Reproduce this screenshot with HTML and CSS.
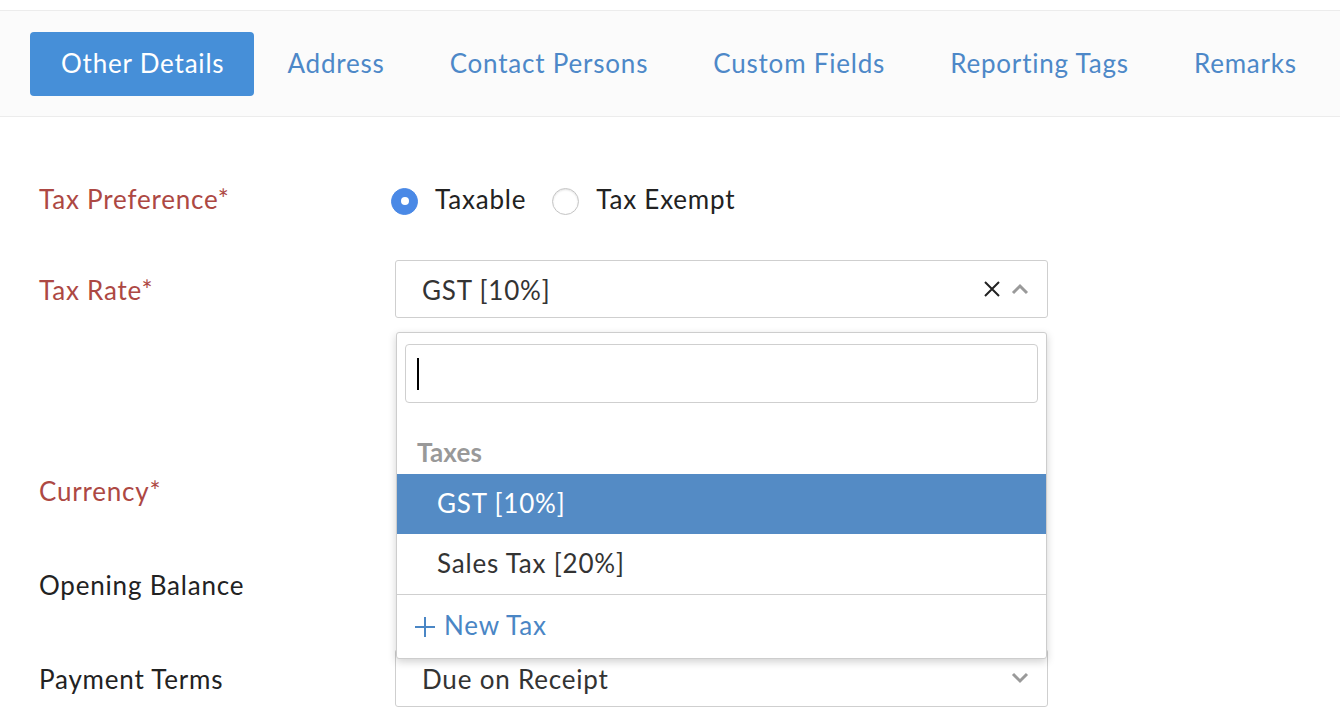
FILE: index.html
```html
<!DOCTYPE html>
<html>
<head>
<meta charset="utf-8">
<link rel="stylesheet" href="styles.css">
</head>
<body>
<div class="topgap"></div>
<nav class="tabs">
  <a class="tab active">Other Details</a>
  <a class="tab">Address</a>
  <a class="tab">Contact Persons</a>
  <a class="tab">Custom Fields</a>
  <a class="tab">Reporting Tags</a>
  <a class="tab">Remarks</a>
</nav>
<main class="form">
  <div class="row row-pref">
    <label class="lbl req">Tax Preference*</label>
    <div class="field radios">
      <span class="radio checked"></span><span class="rtext">Taxable</span>
      <span class="radio"></span><span class="rtext">Tax Exempt</span>
    </div>
  </div>
  <div class="row row-rate">
    <label class="lbl req">Tax Rate*</label>
    <div class="field">
      <div class="select">
        <span class="val">GST [10%]</span>
        <span class="icons">
          <svg class="x" width="18" height="18" viewBox="0 0 18 18"><path d="M2 2L16 16M16 2L2 16" stroke="#222" stroke-width="2" fill="none"/></svg>
          <svg class="chev" width="18" height="12" viewBox="0 0 18 12"><path d="M2 10L9 3L16 10" stroke="#9a9a9a" stroke-width="3" fill="none"/></svg>
        </span>
      </div>
      <div class="dropdown">
        <div class="search"><span class="caret"></span></div>
        <div class="group">Taxes</div>
        <div class="opt hl">GST [10%]</div>
        <div class="opt">Sales Tax [20%]</div>
        <div class="newtax">
          <svg width="22" height="22" viewBox="0 0 22 22"><path d="M11 1V21M1 11H21" stroke="#4a86c5" stroke-width="2" fill="none"/></svg>
          <span>New Tax</span>
        </div>
      </div>
    </div>
  </div>
  <div class="row row-cur">
    <label class="lbl req">Currency*</label>
    <div class="field"></div>
  </div>
  <div class="row row-open">
    <label class="lbl">Opening Balance</label>
    <div class="field"></div>
  </div>
  <div class="row row-pay">
    <label class="lbl">Payment Terms</label>
    <div class="field">
      <div class="select">
        <span class="val">Due on Receipt</span>
        <span class="icons">
          <svg class="chev" width="18" height="12" viewBox="0 0 18 12"><path d="M2 2L9 9L16 2" stroke="#9a9a9a" stroke-width="3" fill="none"/></svg>
        </span>
      </div>
    </div>
  </div>
</main>
</body>
</html>
```

FILE: styles.css
```css
* { box-sizing: border-box; }
body {
  margin: 0;
  background: #fff;
  font-family: Lato, "Liberation Sans", sans-serif;
  font-size: 26px;
  letter-spacing: 0.8px;
  color: #333;
  overflow: hidden;
}
.topgap { height: 10px; }
.tabs {
  display: flex;
  align-items: center;
  height: 107px;
  padding: 0 30px;
  background: #fbfbfb;
  border-top: 1px solid #ececec;
  border-bottom: 1px solid #ececec;
}
.tab {
  height: 64px;
  display: flex;
  align-items: center;
  padding: 0 32px 2px 33px;
  color: #4d88c8;
  border-radius: 4px;
  white-space: nowrap;
}
.tab.active {
  background: #468fd8;
  color: #fff;
  padding: 0 30px 2px 31px;
}
.form {
  padding: 53px 0 0 39px;
}
.row {
  display: flex;
  align-items: center;
  min-height: 58px;
}
.lbl {
  width: 356px;
  flex: none;
  color: #222;
  padding-top: 2px;
}
.lbl.req { color: #ad4843; }
.row-pref .lbl { padding-top: 0; }
.row-pref { margin-bottom: 32px; }
.row-rate { margin-bottom: 143px; }
.row-cur { margin-bottom: 36px; }
.row-open { margin-bottom: 36px; }
.field {
  width: 653px;
  position: relative;
}
.radios {
  display: flex;
  align-items: center;
  margin-left: -4px;
  padding-top: 4px;
}
.radio {
  width: 27px;
  height: 27px;
  border-radius: 50%;
  border: 1px solid #c4c4c4;
  box-shadow: inset 0 1px 2px rgba(0,0,0,0.12);
  background: #fff;
  flex: none;
  position: relative;
}
.radio.checked {
  background: #4a89e6;
  border-color: #4a89e6;
  box-shadow: none;
}
.radio.checked::after {
  content: "";
  position: absolute;
  left: 50%;
  top: 50%;
  width: 8px;
  height: 8px;
  margin: -4px 0 0 -4px;
  border-radius: 50%;
  background: #fff;
}
.rtext { margin: 0 26px 0 17px; color: #222; position: relative; top: -2px; }
.select {
  height: 58px;
  border: 1px solid #cfcfcf;
  border-radius: 3px;
  display: flex;
  align-items: center;
  padding: 2px 18px 0 26px;
  background: #fff;
}
.val { flex: 1; }
.icons { display: flex; align-items: center; gap: 10px; margin-top: -2px; }
.dropdown {
  position: absolute;
  top: 72px;
  left: 1px;
  width: 651px;
  background: #fff;
  border: 1px solid #cdcdcd;
  border-radius: 3px;
  box-shadow: 0 3px 8px rgba(0,0,0,0.18);
  z-index: 5;
}
.search {
  margin: 11px 8px 0 8px;
  height: 59px;
  border: 1px solid #cfcfcf;
  border-radius: 4px;
  display: flex;
  align-items: center;
  padding-left: 11px;
}
.caret {
  width: 2px;
  height: 32px;
  background: #000;
}
.group {
  height: 71px;
  padding: 29px 0 0 20px;
  color: #999;
  font-weight: 700;
  letter-spacing: 0.2px;
  line-height: 40px;
}
.opt {
  height: 60px;
  display: flex;
  align-items: center;
  padding-left: 40px;
  padding-bottom: 3px;
  color: #333;
}
.opt.hl { background: #548bc5; color: #fff; }
.newtax {
  border-top: 1px solid #cfcfcf;
  height: 64px;
  display: flex;
  align-items: center;
  padding-left: 17px;
  color: #4a86c5;
  gap: 8px;
}
.newtax span { position: relative; top: -2px; }
```
